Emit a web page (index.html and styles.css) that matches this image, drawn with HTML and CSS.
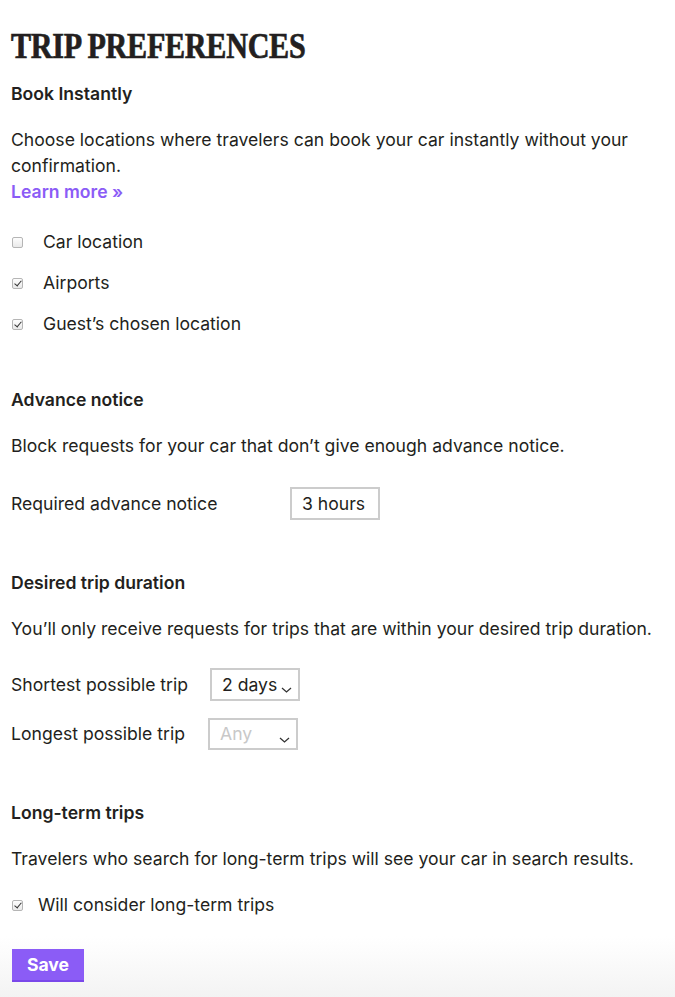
FILE: index.html
```html
<!DOCTYPE html>
<html lang="en">
<head>
<meta charset="utf-8">
<title>Trip preferences</title>
<link rel="stylesheet" href="styles.css">
</head>
<body>
<main class="page">
  <h1 class="title">TRIP PREFERENCES</h1>

  <section class="section">
    <h3 class="heading">Book Instantly</h3>
    <p class="text">Choose locations where travelers can book your car instantly without your confirmation.<br><a class="link" href="#">Learn more »</a></p>
    <div class="checks">
      <label class="check"><span class="box"></span><span class="check-label">Car location</span></label>
      <label class="check"><span class="box on"></span><span class="check-label">Airports</span></label>
      <label class="check"><span class="box on"></span><span class="check-label">Guest’s chosen location</span></label>
    </div>
  </section>

  <section class="section">
    <h3 class="heading">Advance notice</h3>
    <p class="text">Block requests for your car that don’t give enough advance notice.</p>
    <div class="row row-notice">
      <span class="row-label notice-label">Required advance notice</span>
      <span class="field">3 hours</span>
    </div>
  </section>

  <section class="section">
    <h3 class="heading">Desired trip duration</h3>
    <p class="text">You’ll only receive requests for trips that are within your desired trip duration.</p>
    <div class="row row-trip">
      <span class="row-label">Shortest possible trip</span>
      <span class="select">2 days<svg class="chev" width="11" height="6" viewBox="0 0 11 6"><path d="M1 1l4.5 4L10 1" fill="none" stroke="#333" stroke-width="1.3"/></svg></span>
    </div>
    <div class="row row-trip row-last">
      <span class="row-label">Longest possible trip</span>
      <span class="select disabled">Any<svg class="chev" width="11" height="6" viewBox="0 0 11 6"><path d="M1 1l4.5 4L10 1" fill="none" stroke="#333" stroke-width="1.3"/></svg></span>
    </div>
  </section>

  <section class="section">
    <h3 class="heading">Long-term trips</h3>
    <p class="text">Travelers who search for long-term trips will see your car in search results.</p>
    <label class="check check-single"><span class="box on"></span><span class="check-label">Will consider long-term trips</span></label>
  </section>
</main>
<footer class="footer">
  <button class="save" type="button">Save</button>
</footer>
</body>
</html>
```

FILE: styles.css
```css
* { box-sizing: border-box; }
html, body { margin: 0; padding: 0; background: #fff; }
body {
  font-family: Inter, "Noto Sans", sans-serif;
  color: #231f20;
  font-size: 17.6px;
  line-height: 26px;
}
.page { padding: 27px 11px 0 11px; }
.title {
  font-family: "Liberation Serif", "DejaVu Serif", serif;
  font-weight: 700;
  font-size: 35px;
  line-height: 40px;
  margin: 0 0 14px 0;
  letter-spacing: -0.3px;
  -webkit-text-stroke: 0.7px #231f20;
  transform: scaleX(0.86);
  transform-origin: left center;
  white-space: nowrap;
}
.section { margin-bottom: 50px; }
.section:last-child { margin-bottom: 0; }
.heading {
  font-size: 17.6px;
  font-weight: 600;
  line-height: 26px;
  margin: 0 0 20px 0;
}
.text { margin: 0; }
.link { color: #8b5cf6; font-weight: 600; text-decoration: none; }
.checks { display: flex; flex-direction: column; gap: 15px; margin-top: 24px; }
.check { display: flex; align-items: center; }
.check-label { margin-left: 20px; }
.check-single { margin-top: 20px; }
.check-single .check-label { margin-left: 15px; }
.box {
  width: 11px; height: 11px;
  margin-left: 1px;
  border: 1px solid #b5b5b5;
  border-radius: 2px;
  background: linear-gradient(#fdfdfd, #e9e9e9);
  position: relative;
  flex: none;
}
.box.on::after {
  content: "";
  position: absolute;
  left: 3px; top: 0px;
  width: 3px; height: 6px;
  border: solid #333;
  border-width: 0 1.8px 1.8px 0;
  transform: rotate(40deg);
}
.row { display: flex; align-items: center; }
.row-notice { margin-top: 28px; }
.notice-label { width: 279px; }
.field, .select {
  display: inline-flex; align-items: center;
  height: 33px;
  width: 90px;
  border: 2px solid #cccccc;
  padding-left: 10px;
  color: #231f20;
}
.row-trip { margin-top: 26px; }
.row-trip .row-label { width: 199px; }
.row-last { margin-top: 17px; }
.row-last .row-label { width: 197px; }
.select { position: relative; padding-left: 10px; }
.select.disabled { color: #c8c8c8; height: 32px; }
.chev { position: absolute; right: 6px; top: 17px; }
.footer {
  margin-top: 18px;
  padding: 13px 12px 16px 12px;
  background: linear-gradient(#ffffff, #f3f3f3);
}
.save {
  font-family: Inter, "Noto Sans", sans-serif;
  font-size: 17.6px;
  font-weight: 700;
  color: #fff;
  background: #8b5cf6;
  border: 0;
  border-bottom: 2px solid #7a48ea;
  width: 72px;
  height: 33px;
  padding: 0;
  line-height: 30px;
}
```
